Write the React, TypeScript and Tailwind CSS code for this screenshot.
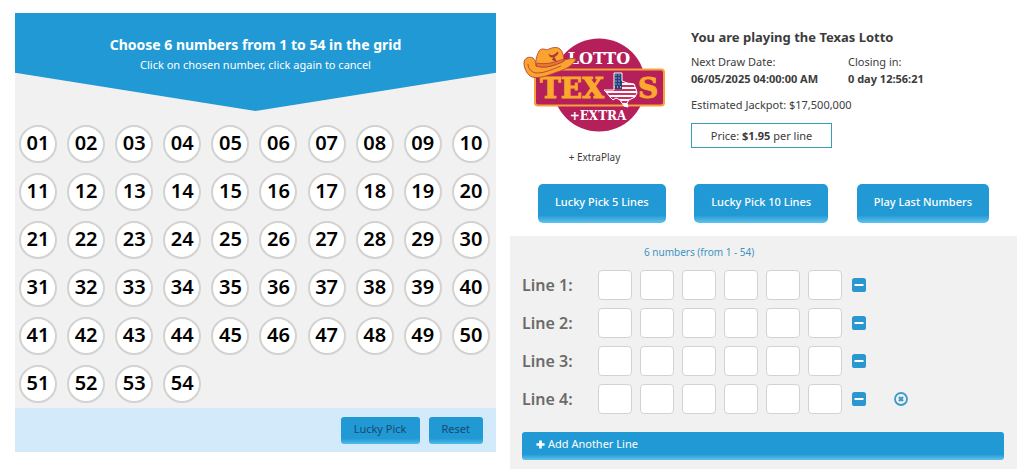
const NUMBERS = Array.from({ length: 54 }, (_, i) => String(i + 1).padStart(2, "0"));
const LINES = [1, 2, 3, 4];
const PICKS = [1, 2, 3, 4, 5, 6];

function TexasLottoLogo() {
  return (
    <svg viewBox="0 0 144 96" className="h-24 w-36" role="img" aria-label="Lotto Texas + Extra">
      <circle cx="76" cy="48" r="46.5" fill="#b51f5a" />
      <text x="76" y="27" textAnchor="middle" fontFamily="'DejaVu Serif', serif" fontWeight="700" fontSize="16" fill="#fff">
        LOTTO
      </text>
      <rect x="12" y="32.5" width="129" height="36" rx="3" fill="#b51f5a" stroke="#f9a13a" strokeWidth="2" />
      <g fontFamily="'DejaVu Serif', serif" fontWeight="700" fontSize="28" fill="#fba92c" stroke="#fba92c" strokeWidth="1">
        <text x="17" y="61">TEX</text>
        <text x="115" y="61">S</text>
      </g>
      <text x="75" y="83" textAnchor="middle" fontFamily="'DejaVu Serif', serif" fontWeight="700" fontSize="12" fill="#fff">
        +EXTRA
      </text>

      {/* state outline with the flag inside */}
      <clipPath id="state">
        <path d="M91 36h8v8l5 2 7 1 2 5 1 4-2 4-6 3-2 3 1 4-4-1-4-6-4-2-3 2-3-3-4-5-2-2h10z" />
      </clipPath>
      <g clipPath="url(#state)">
        <rect x="80" y="34" width="36" height="36" fill="#fff" />
        <path d="M99 45h16M99 49h16M80 53h36M80 57h36M80 61h36M80 65h36" stroke="#cf2f5c" strokeWidth="1.8" />
        <path d="M80 34h19v18H80z" fill="#253f7a" />
        <path d="M92.5 38h6M92.5 41h6M92.5 44h6M92.5 47h6M85 50h14" stroke="#fff" strokeWidth="1" strokeDasharray="1 2" />
      </g>
      <path
        d="M91 36h8v8l5 2 7 1 2 5 1 4-2 4-6 3-2 3 1 4-4-1-4-6-4-2-3 2-3-3-4-5-2-2h10z"
        fill="none"
        stroke="#fff"
        strokeWidth="1"
      />

      {/* hat */}
      <g fill="#fba32e" stroke="#b5453a" strokeWidth="0.9" strokeLinejoin="round">
        <path d="M1 26c0-5 5-7 9-5 2 2 3 5 4 7 10 1 19-2 27-5 4-1 8-2 12-1-3 7-12 11-19 13-8 3-17 7-25 5C4 38 1 31 1 26z" />
        <path d="M13 29c-1-5 1-11 3-15 2-3 6-2 8-1 4-2 9-4 13-1 3 3 4 8 4 12-8 4-18 8-28 5z" />
        <path d="M14 26c9 2 19-1 27-4v2c-8 4-18 8-28 5z" fill="#e9792f" />
        <path d="M25 16c2 3 6 3 9-1 1-1 2 1 1 2-2 3-5 4-8 3z" fill="#a53a38" stroke="none" />
        <path d="M29 23l2-4 3 6z" fill="#a53a38" stroke="none" />
        <path d="M5 27c0 5 4 9 9 9 8 0 16-4 24-7" fill="none" />
      </g>
    </svg>
  );
}

function MinusIcon() {
  return (
    <svg viewBox="0 0 14 14" className="size-[14px]" aria-hidden="true">
      <rect width="14" height="14" rx="2.6" fill="currentColor" />
      <path d="M2.500 7h9" stroke="#fff" strokeWidth="2" />
    </svg>
  );
}

function PlusIcon() {
  return (
    <svg viewBox="0 0 10 10" className="size-[9px]" aria-hidden="true">
      <path d="M5 0.500v9M0.500 5h9" stroke="currentColor" strokeWidth="3" />
    </svg>
  );
}

function RemoveIcon() {
  return (
    <svg viewBox="0 0 14 14" className="size-[14px]" fill="none" stroke="currentColor" aria-hidden="true">
      <circle cx="7" cy="7" r="6" strokeWidth="1.8" />
      <path d="M5 5l4 4M9 5l-4 4" strokeWidth="2.4" />
    </svg>
  );
}

function PanelButton({ children }: { children: string }) {
  return (
    <button
      type="button"
      className="h-[27px] rounded-[3px] bg-linear-to-b from-[#2199d4] from-80% to-[#4dbdea] px-[13px] pb-[2px] text-[11px] text-[#174a70]"
    >
      {children}
    </button>
  );
}

function NumberGrid() {
  return (
    <section className="min-w-0 flex-[481] bg-[#f1f1f1]">
      <div className="h-[98px] bg-[#2199d4] pt-5 text-center text-white [clip-path:polygon(0_0,100%_0,100%_61%,50%_100%,0_61%)]">
        <h1 className="text-sm leading-6 font-bold">Choose 6 numbers from 1 to 54 in the grid</h1>
        <p className="text-[11px] leading-4">Click on chosen number, click again to cancel</p>
      </div>
      <div className="mt-[9px] grid grid-cols-10">
        {NUMBERS.map((n) => (
          <div key={n} className="flex h-12 items-center pl-1">
            <button
              type="button"
              className="size-[38px] rounded-full border-2 border-[#d2d2d2] bg-white pb-[2px] text-xl leading-8 font-semibold text-black"
            >
              {n}
            </button>
          </div>
        ))}
      </div>
      <div className="flex justify-end gap-[9px] bg-[#d3eafa] px-[13px] pt-[9px] pb-2">
        <PanelButton>Lucky Pick</PanelButton>
        <PanelButton>Reset</PanelButton>
      </div>
    </section>
  );
}

function DrawInfo() {
  return (
    <div className="flex h-[171px] pt-6">
      <div className="flex w-[181px] flex-col items-center pr-3">
        <TexasLottoLogo />
        <p className="mt-4 text-[10px] leading-4">+ ExtraPlay</p>
      </div>
      <div className="text-[11px] leading-[17px]">
        <h2 className="-mt-3 text-[13px] leading-6 font-bold">You are playing the Texas Lotto</h2>
        <dl className="mt-1 grid grid-cols-[157px_auto]">
          <div>
            <dt>Next Draw Date:</dt>
            <dd className="font-bold">06/05/2025 04:00:00 AM</dd>
          </div>
          <div>
            <dt>Closing in:</dt>
            <dd className="font-bold">0 day 12:56:21</dd>
          </div>
        </dl>
        <p className="mt-[9px]">Estimated Jackpot: $17,500,000</p>
        <p className="mt-[10px] w-[141px] border border-[#3a9db8] py-[3px] text-center">
          Price: <strong>$1.95</strong> per line
        </p>
      </div>
    </div>
  );
}

function PlayButton({ children }: { children: string }) {
  return (
    <button
      type="button"
      className="h-[39px] rounded-[5px] bg-linear-to-b from-[#2199d4] from-80% to-[#5cc3ec] px-[17px] pb-[2px] text-[11px] font-medium text-white"
    >
      {children}
    </button>
  );
}

function Lines() {
  return (
    <div className="bg-[#f1f1f1] pt-2 pr-[13px] pb-[10px] pl-3">
      <p className="ml-[122px] text-[10px] leading-4 text-[#3e93c3]">6 numbers (from 1 - 54)</p>
      <div className="mt-[10px] flex flex-col gap-2">
        {LINES.map((line) => (
          <div key={line} className="flex items-center">
            <label htmlFor={`line-${line}-1`} className="w-[76px] text-base leading-5 font-semibold text-[#6b6b6b]">
              Line {line}:
            </label>
            <div className="flex gap-2">
              {PICKS.map((pick) => (
                <input
                  key={pick}
                  id={`line-${line}-${pick}`}
                  aria-label={`Line ${line}: number ${pick}`}
                  className="h-[30px] w-[34px] rounded border border-[#d2d2d2] bg-white text-center text-sm"
                />
              ))}
            </div>
            <button type="button" aria-label={`Clear line ${line}`} className="ml-[10px] text-[#2b97d0]">
              <MinusIcon />
            </button>
            {line === LINES.length && (
              <button type="button" aria-label={`Remove line ${line}`} className="ml-7 text-[#3e9bc9]">
                <RemoveIcon />
              </button>
            )}
          </div>
        ))}
      </div>
      <button
        type="button"
        className="mt-[18px] flex h-7 w-full items-center gap-[3px] rounded-[3px] bg-linear-to-b from-[#2199d4] from-80% to-[#5cc3ec] px-[14px] pb-[3px] text-[11px] text-white"
      >
        <PlusIcon />
        Add Another Line
      </button>
    </div>
  );
}

export default function App() {
  return (
    <main className="flex items-start gap-[14px] bg-white pr-[7px] pl-[15px] font-['Noto_Sans','Open_Sans',sans-serif] text-[#3c3c3c]">
      <div className="flex min-w-0 flex-[481] pt-[13px]">
        <NumberGrid />
      </div>
      <section className="min-w-0 flex-[507] pt-[13px]">
        <DrawInfo />
        <div className="flex justify-between pr-7 pb-[13px] pl-7">
          <PlayButton>Lucky Pick 5 Lines</PlayButton>
          <PlayButton>Lucky Pick 10 Lines</PlayButton>
          <PlayButton>Play Last Numbers</PlayButton>
        </div>
        <Lines />
      </section>
    </main>
  );
}
